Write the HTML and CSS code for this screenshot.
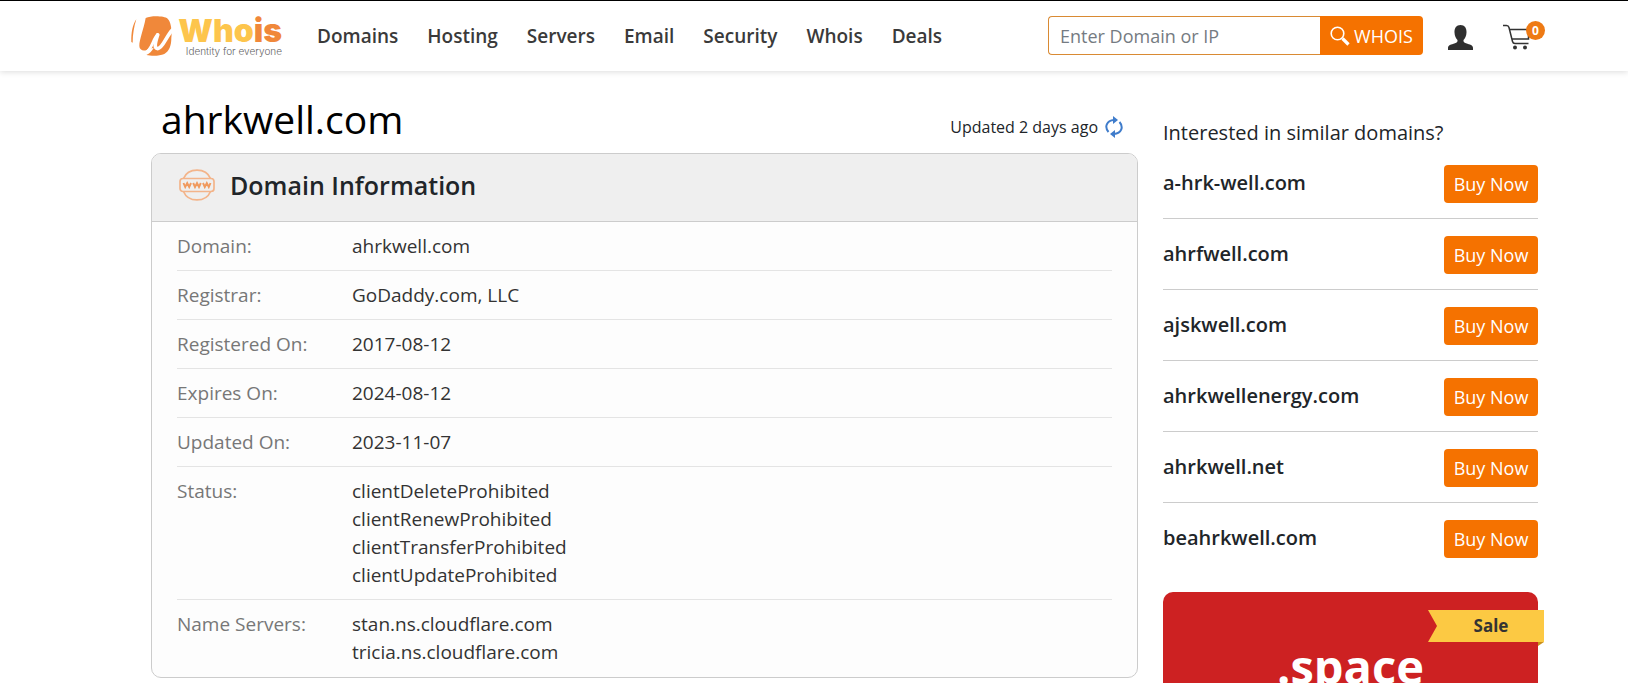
FILE: index.html
```html
<!DOCTYPE html>
<html lang="en">
<head>
<meta charset="utf-8">
<meta name="viewport" content="width=device-width, initial-scale=1">
<title>Whois ahrkwell.com</title>
<link rel="stylesheet" href="styles.css">
</head>
<body>
<header class="site-header">
  <a class="logo" href="#" aria-label="Whois home">
    <svg class="logo-mark" viewBox="0 0 123 120" aria-hidden="true">
      <path fill="#f0883a" d="M16 10C5 26 0 50 1 78L5 80C5 56 9 32 16 10Z"/>
      <path fill="#f0883a" d="M44 6C62 -2 100 0 110 8C122 20 123 50 121 66C121 90 114 106 100 114C84 121 60 120 46 117C56 113 62 106 68 96L52 98C42 108 25 104 25 90C25 70 38 40 44 6Z"/>
      <g fill="none" stroke="#fff" stroke-linecap="round"><path stroke-width="9" d="M42 112C64 100 66 68 80 56"/><path stroke-width="11" d="M80 57C73 78 68 98 80 98C96 96 106 60 124 42"/></g>
    </svg>
    <span class="logo-text">
      <span class="logo-name">Who<span class="logo-accent">is</span></span>
      <span class="logo-tagline">Identity for everyone</span>
    </span>
  </a>
  <nav class="main-nav" aria-label="Main">
    <a href="#">Domains</a>
    <a href="#">Hosting</a>
    <a href="#">Servers</a>
    <a href="#">Email</a>
    <a href="#">Security</a>
    <a href="#">Whois</a>
    <a href="#">Deals</a>
  </nav>
  <form class="search">
    <input class="search-input" type="text" placeholder="Enter Domain or IP" aria-label="Enter Domain or IP">
    <button class="search-button" type="submit">
      <svg class="search-icon" viewBox="0 0 20 20" aria-hidden="true"><circle cx="7.5" cy="7.5" r="6.3" fill="none" stroke="currentColor" stroke-width="1.6"/><path d="M12.5 12.5L18.5 18.5" stroke="currentColor" stroke-width="3.2"/></svg>
      WHOIS
    </button>
  </form>
  <div class="header-tools">
    <a class="account" href="#" aria-label="Account">
      <svg class="account-icon" viewBox="0 0 25 25" aria-hidden="true"><path fill="#2f2f2f" d="M12.5 0C16.600 0 18.700 3 18.500 7.500C18.400 11 17 13.500 15.500 15C15.300 17 16 17.500 18 18.200C22 19.500 25 20 25 23V25H0V23C0 20 3 19.500 7 18.200C9 17.500 9.700 17 9.500 15C8 13.500 6.600 11 6.500 7.500C6.300 3 8.400 0 12.500 0Z"/></svg>
    </a>
    <a class="cart" href="#" aria-label="Cart, 0 items">
      <svg class="cart-icon" viewBox="0 0 28 26" aria-hidden="true"><g fill="none" stroke="#333" stroke-width="1.500"><path d="M0 1.500H3.500Q5.500 1.500 6 3.500L9.500 17.500Q10 19.500 12 19.500H25.500M7 5.500H25M9.500 15H25.500V10"/></g><circle cx="12" cy="23.500" r="2" fill="#333"/><circle cx="22" cy="23.500" r="2" fill="#333"/></svg>
      <span class="cart-badge">0</span>
    </a>
  </div>
</header>

<div class="page">
  <main class="main">
    <div class="title-row">
      <h1 class="title">ahrkwell.com</h1>
      <p class="updated">Updated 2 days ago
        <button class="refresh" type="button" aria-label="Refresh">
          <svg class="refresh-icon" viewBox="0 0 18 22" aria-hidden="true"><g fill="none" stroke="#3f7ccb" stroke-width="2"><path d="M3.500 16C-.8 11 1.500 4.500 9 4"/><path d="M14.500 6C18.800 11 16.500 17.500 9 18"/></g><path fill="#3f7ccb" d="M8 0L13 4L8 8ZM10 14L5 18L10 22Z"/></svg>
        </button>
      </p>
    </div>
    <section class="panel">
      <div class="panel-head">
        <svg class="www-icon" viewBox="0 0 36 32" aria-hidden="true"><g fill="none" stroke="#f3b48a" stroke-width="1.700"><path d="M4.500 9.500C9 -1.700 27 -1.700 31.500 9.500M4.500 22.500C9 33.700 27 33.700 31.500 22.500"/><rect x="1" y="9.500" width="34" height="13" rx="3"/></g><path fill="none" stroke="#f09a5f" stroke-width="1.900" d="M4.500 14L6.200 18L8.200 14L10.200 18L12 14M14.200 14L16 18L18 14L20 18L21.800 14M24 14L25.800 18L27.800 14L29.800 18L31.500 14"/></svg>
        <h2 class="panel-title">Domain Information</h2>
      </div>
      <dl class="facts">
        <div class="fact"><dt>Domain:</dt><dd>ahrkwell.com</dd></div>
        <div class="fact"><dt>Registrar:</dt><dd>GoDaddy.com, LLC</dd></div>
        <div class="fact"><dt>Registered On:</dt><dd>2017-08-12</dd></div>
        <div class="fact"><dt>Expires On:</dt><dd>2024-08-12</dd></div>
        <div class="fact"><dt>Updated On:</dt><dd>2023-11-07</dd></div>
        <div class="fact"><dt>Status:</dt><dd>clientDeleteProhibited<br>clientRenewProhibited<br>clientTransferProhibited<br>clientUpdateProhibited</dd></div>
        <div class="fact"><dt>Name Servers:</dt><dd>stan.ns.cloudflare.com<br>tricia.ns.cloudflare.com</dd></div>
      </dl>
    </section>
  </main>

  <aside class="sidebar">
    <h2 class="sidebar-title">Interested in similar domains?</h2>
    <ul class="similar">
      <li><span>a-hrk-well.com</span><button class="buy" type="button">Buy Now</button></li>
      <li><span>ahrfwell.com</span><button class="buy" type="button">Buy Now</button></li>
      <li><span>ajskwell.com</span><button class="buy" type="button">Buy Now</button></li>
      <li><span>ahrkwellenergy.com</span><button class="buy" type="button">Buy Now</button></li>
      <li><span>ahrkwell.net</span><button class="buy" type="button">Buy Now</button></li>
      <li><span>beahrkwell.com</span><button class="buy" type="button">Buy Now</button></li>
    </ul>
    <section class="promo">
      <span class="ribbon">Sale</span>
      <p class="promo-name">.space</p>
    </section>
  </aside>
</div>
</body>
</html>
```
FILE: styles.css
```css
* { box-sizing: border-box; }

body {
  margin: 0;
  background: #fff;
  color: #212529;
  font-family: "Open Sans", "Noto Sans", sans-serif;
  font-size: 19px;
  line-height: 28px;
}

h1, h2, p, ul, dl, dd { margin: 0; padding: 0; }

a { color: inherit; text-decoration: none; }

button, input { font: inherit; }

/* Header */
.site-header {
  display: flex;
  align-items: center;
  height: 71px;
  padding: 0 83px 0 131px;
  border-top: 1px solid #000;
  background: #fff;
  box-shadow: 0 1px 6px rgba(0, 0, 0, 0.14);
}

.logo { display: flex; align-items: center; gap: 8px; }

.logo-mark { width: 41px; height: 40px; }

.logo-text { display: flex; flex-direction: column; align-items: flex-end; width: 102px; padding-top: 2px; }

.logo-name {
  color: #fdc54c;
  font-family: Inter, sans-serif;
  font-size: 32px;
  font-weight: 900;
  line-height: 28px;
}

.logo-accent { color: #f0883a; }

.logo-tagline {
  color: #666;
  font-family: Inter, sans-serif;
  font-size: 10px;
  font-weight: 300;
  line-height: 12px;
  white-space: nowrap;
}

.main-nav {
  display: flex;
  gap: 29px;
  margin-left: 35px;
  color: #3a3a3a;
  font-weight: 600;
}

.search { display: flex; width: 375px; height: 39px; margin: 0 0 1px auto; }

.search-input {
  flex: 1;
  min-width: 0;
  padding: 0 11px;
  border: 1px solid #d98a33;
  border-right: 0;
  border-radius: 4px 0 0 4px;
  background: #fff;
  font-size: 18px;
}

.search-input::placeholder { color: #757b82; opacity: 1; }

.search-button {
  display: flex;
  align-items: center;
  justify-content: center;
  gap: 4px;
  width: 103px;
  padding: 0;
  border: 0;
  border-radius: 0 4px 4px 0;
  background: #f57200;
  color: #fff;
  font-size: 18px;
}

.search-icon { width: 20px; height: 20px; }

.header-tools { display: flex; align-items: center; gap: 30px; margin: 2px 0 0 25px; }

.account, .cart { display: flex; }

.account-icon { width: 25px; height: 25px; }

.cart { position: relative; padding-right: 14px; }

.cart-icon { width: 28px; height: 26px; }

.cart-badge {
  position: absolute;
  top: -3px;
  right: 0;
  width: 19px;
  height: 19px;
  border-radius: 50%;
  background: #ee7a14;
  color: #fff;
  font-size: 12px;
  font-weight: 700;
  line-height: 19px;
  text-align: center;
}

/* Page columns */
.page { display: flex; gap: 25px; padding: 0 90px 0 151px; }

.main { flex: 1; min-width: 0; padding-top: 21px; }

.title-row {
  display: flex;
  align-items: flex-end;
  justify-content: space-between;
  padding: 0 15px 7px 10px;
}

.title { color: #000; font-size: 39px; font-weight: 400; line-height: 54px; }

.updated {
  display: flex;
  align-items: center;
  gap: 7px;
  padding-bottom: 5px;
  font-size: 16px;
}

.refresh { display: flex; padding: 0; border: 0; background: none; }

.refresh-icon { width: 18px; height: 22px; }

.panel {
  border: 1px solid #ccc;
  border-radius: 10px;
  background: #fdfdfd;
  overflow: hidden;
}

.panel-head {
  display: flex;
  align-items: center;
  gap: 15px;
  height: 68px;
  padding: 0 27px 6px;
  border-bottom: 1px solid #ccc;
  background: #efefef;
}

.www-icon { width: 36px; height: 32px; }

.panel-title { font-size: 25px; font-weight: 600; line-height: 34px; }

.facts { padding: 0 25px; }

.fact {
  display: flex;
  padding: 10px 0;
  border-bottom: 1px solid #e4e4e4;
}

.fact:last-child { border-bottom-color: transparent; }

.fact dt { width: 175px; color: #777; }

.fact dd { flex: 1; color: #333; }

/* Sidebar */
.sidebar { width: 375px; padding-top: 48px; }

.sidebar-title { font-size: 20px; font-weight: 400; line-height: 28px; }

.similar { padding-top: 1px; list-style: none; }

.similar li {
  display: flex;
  align-items: center;
  justify-content: space-between;
  height: 71px;
  padding-top: 1px;
  border-bottom: 1px solid #ccc;
  font-size: 20px;
  font-weight: 600;
}

.similar li:last-child { border-bottom-color: transparent; }

.similar span { padding-bottom: 2px; }

.buy {
  width: 94px;
  height: 38px;
  padding: 0;
  border: 0;
  border-radius: 4px;
  background: #f57200;
  color: #fff;
  font-size: 18px;
  font-weight: 400;
}

.promo {
  position: relative;
  margin-top: 18px;
  padding: 46px 0 50px;
  border-radius: 10px;
  background: #cd2122;
  color: #fff;
  text-align: center;
}

.promo-name { font-size: 47px; font-weight: 700; line-height: 56px; }

.ribbon {
  position: absolute;
  top: 18px;
  right: -6px;
  width: 116px;
  height: 32px;
  padding-left: 10px;
  background: #fcc943;
  clip-path: polygon(0 0, 100% 0, 100% 100%, 0 100%, 9px 50%);
  color: #333;
  font-family: "Noto Sans", sans-serif;
  font-size: 17px;
  font-weight: 700;
  line-height: 32px;
}

.promo::after {
  content: "";
  position: absolute;
  top: 50px;
  right: -6px;
  width: 6px;
  height: 4px;
  background: #c98f1b;
  clip-path: polygon(0 0, 100% 0, 0 100%);
}
```
